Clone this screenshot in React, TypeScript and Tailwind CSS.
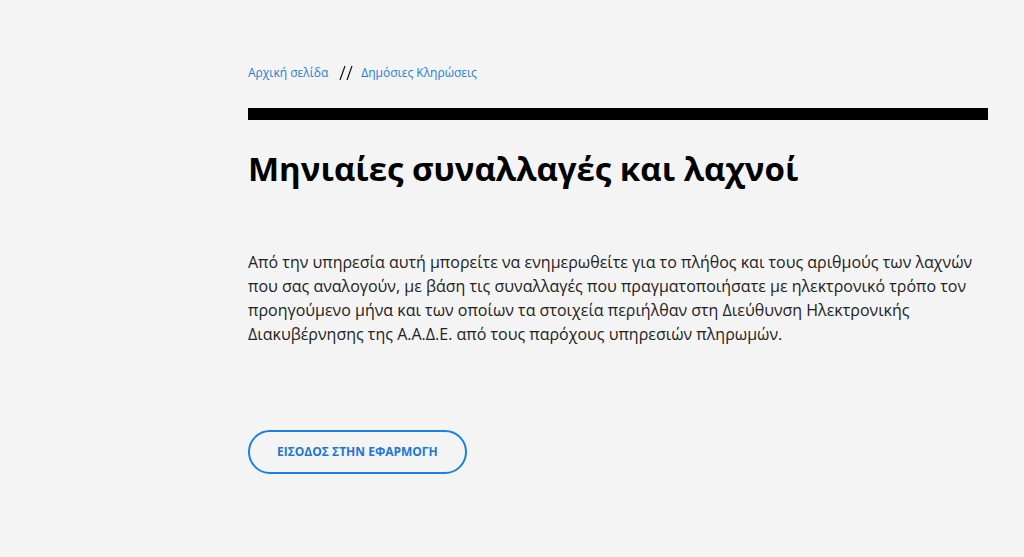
export default function App() {
  return (
    <main
      className="min-h-screen bg-[#f4f4f4] text-[#222]"
      style={{ fontFamily: '"Open Sans", "Noto Sans", sans-serif' }}
    >
      <div className="ml-[248px] w-[740px] pt-[64px]">
        <nav className="flex h-[18px] items-center text-[12px] text-[#1f7ed4]">
          <a href="#" className="hover:underline">
            Αρχική σελίδα
          </a>
          <svg
            width="14"
            height="16"
            viewBox="0 0 14 16"
            className="ml-[11px] mr-[8px]"
            aria-hidden="true"
          >
            <path
              d="M6 1 L1 15 M13 1 L8 15"
              stroke="#111"
              strokeWidth="1.2"
              fill="none"
            />
          </svg>
          <a href="#" className="hover:underline">
            Δημόσιες Κληρώσεις
          </a>
        </nav>

        <div className="mt-[26px] h-[12px] bg-black" />

        <h1 className="mt-[27px] text-[33px] font-bold leading-[44px] text-black">
          Μηνιαίες συναλλαγές και λαχνοί
        </h1>

        <p className="mt-[59px] text-[16px] leading-[24px] text-[#222]">
          Από την υπηρεσία αυτή μπορείτε να ενημερωθείτε για το πλήθος και τους
          αριθμούς των λαχνών που σας αναλογούν, με βάση τις συναλλαγές που
          πραγματοποιήσατε με ηλεκτρονικό τρόπο τον προηγούμενο μήνα και των
          οποίων τα στοιχεία περιήλθαν στη Διεύθυνση Ηλεκτρονικής Διακυβέρνησης
          της Α.Α.Δ.Ε. από τους παρόχους υπηρεσιών πληρωμών.
        </p>

        <button className="mt-[84px] h-[44px] rounded-full border-2 border-[#1680e4] px-[27px] text-[12px] font-bold text-[#1a78d6]">
          ΕΙΣΟΔΟΣ ΣΤΗΝ ΕΦΑΡΜΟΓΗ
        </button>
      </div>
    </main>
  );
}
